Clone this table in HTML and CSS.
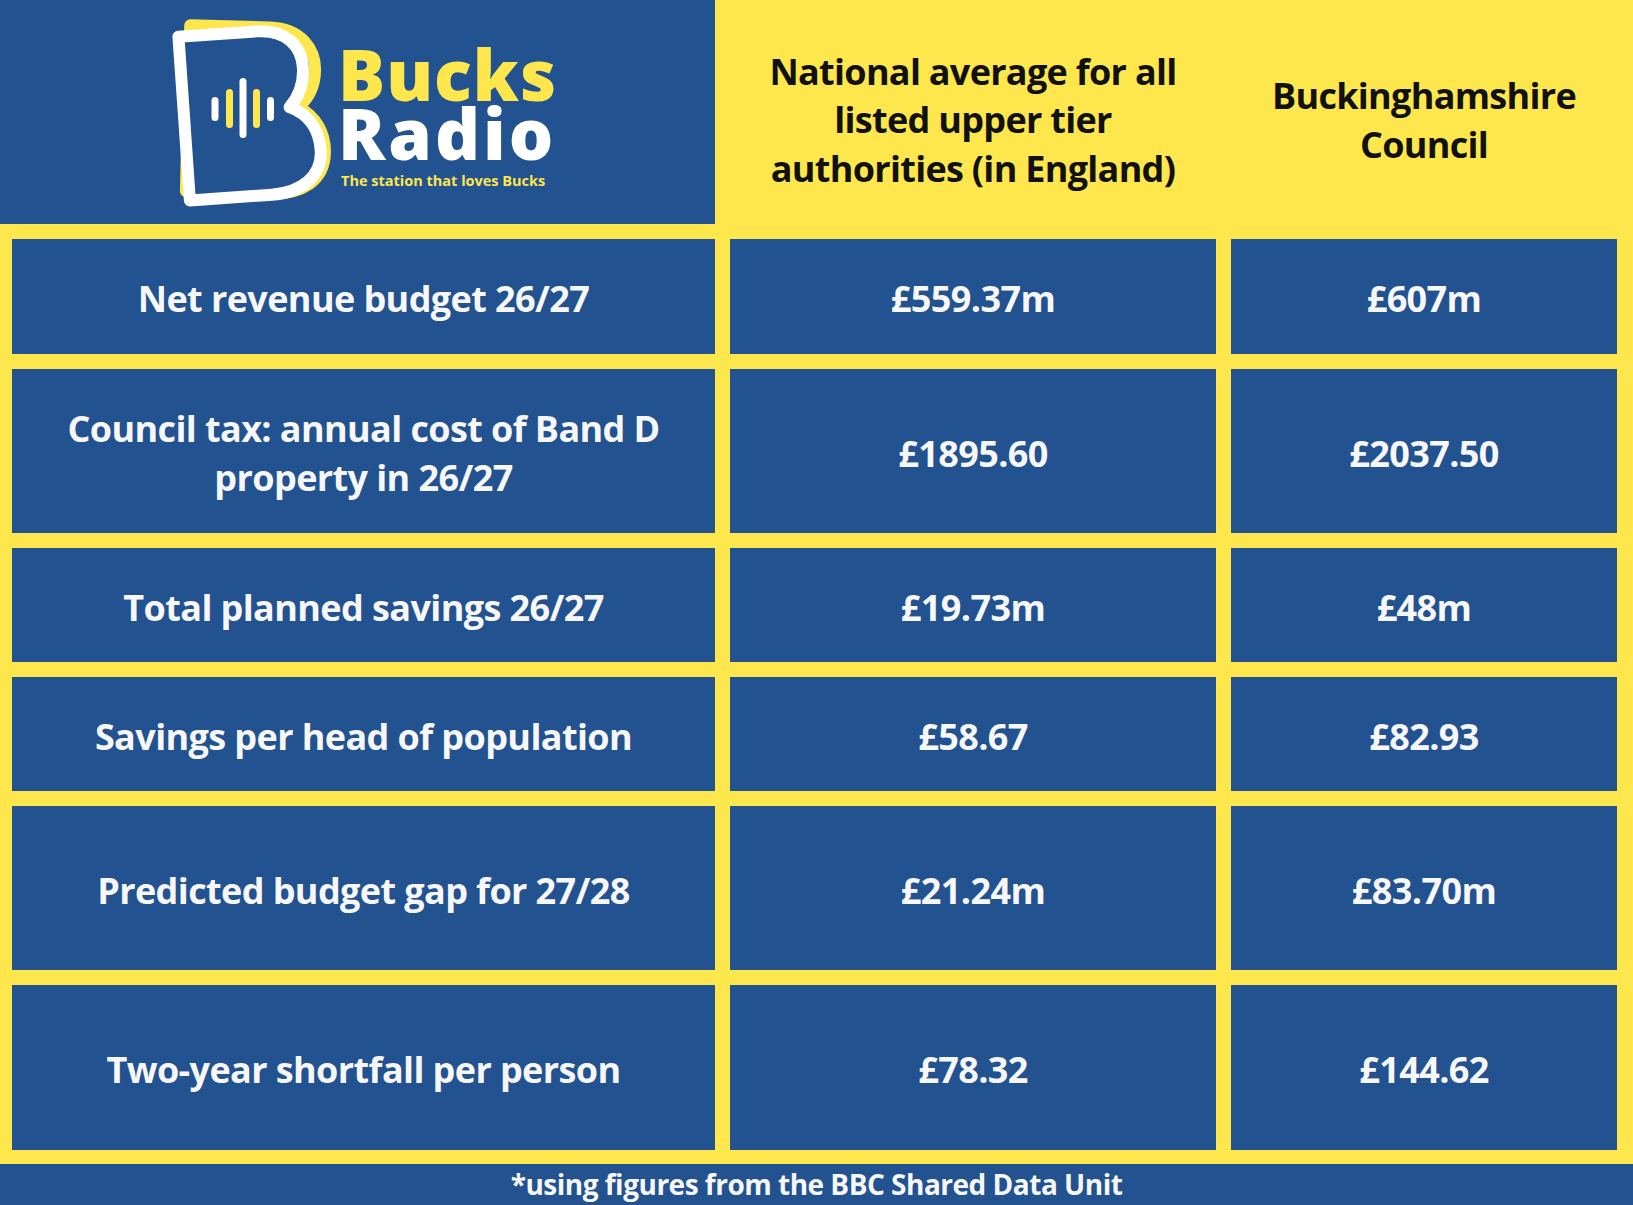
FILE: index.html
```html
<!DOCTYPE html>
<html lang="en">
<head>
<meta charset="utf-8">
<title>Bucks Radio – Council budget comparison</title>
<link rel="stylesheet" href="styles.css">
</head>
<body>
<div class="page">
  <header class="top">
    <div class="logo-cell">
      <svg class="logo-mark" width="160" height="200" viewBox="0 0 160 200" aria-hidden="true">
        <path class="b-yellow" d="M14,16 L94,16 C124,16 140,36 140,58 C140,76 132,88 124,95 C142,104 152,120 152,140 C152,168 130,182 98,182 L14,182 Z" transform="translate(4,-3) rotate(1.5 80 100)"/>
        <path class="b-white" d="M14,18 L92,18 C122,18 136,36 136,57 C136,75 128,88 120,96 C138,104 148,120 148,141 C148,167 126,182 96,182 L14,182 Z" transform="rotate(-4 80 100)"/>
        <line class="bar bar-w" x1="45" y1="86.5" x2="45" y2="103.5"/>
        <line class="bar bar-y" x1="59.5" y1="78.5" x2="59.5" y2="110.5"/>
        <line class="bar bar-w" x1="73" y1="67.5" x2="73" y2="120.5"/>
        <line class="bar bar-y" x1="86.5" y1="78.5" x2="86.5" y2="110.5"/>
        <line class="bar bar-w" x1="100.5" y1="86.5" x2="100.5" y2="103.5"/>
      </svg>
      <div class="logo-text">
        <div class="logo-bucks">Bucks</div>
        <div class="logo-radio">Radio</div>
        <div class="logo-tag">The station that loves Bucks</div>
      </div>
    </div>
    <div class="head-cell head-national">National average for all<br>listed upper tier<br>authorities (in England)</div>
    <div class="head-cell head-bucks">Buckinghamshire<br>Council</div>
  </header>

  <main class="grid">
    <div class="cell">Net revenue budget 26/27</div>
    <div class="cell">£559.37m</div>
    <div class="cell">£607m</div>

    <div class="cell">Council tax: annual cost of Band D<br>property in 26/27</div>
    <div class="cell">£1895.60</div>
    <div class="cell">£2037.50</div>

    <div class="cell">Total planned savings 26/27</div>
    <div class="cell">£19.73m</div>
    <div class="cell">£48m</div>

    <div class="cell">Savings per head of population</div>
    <div class="cell">£58.67</div>
    <div class="cell">£82.93</div>

    <div class="cell">Predicted budget gap for 27/28</div>
    <div class="cell">£21.24m</div>
    <div class="cell">£83.70m</div>

    <div class="cell">Two-year shortfall per person</div>
    <div class="cell">£78.32</div>
    <div class="cell">£144.62</div>
  </main>

  <footer class="foot">*using figures from the BBC Shared Data Unit</footer>
</div>
</body>
</html>
```

FILE: styles.css
```css
* { box-sizing: border-box; }

html, body {
  margin: 0;
  padding: 0;
  background: #fde74c;
}

.page {
  width: 1633px;
  height: 1205px;
  overflow: hidden;
  background: #fde74c;
  font-family: "Open Sans", "Noto Sans", sans-serif;
}

/* ---------- header ---------- */
.top {
  display: flex;
  align-items: flex-start;
  height: 239px;
}

.logo-cell {
  width: 715px;
  height: 224px;
  background: #22528f;
  display: flex;
  align-items: flex-start;
  padding-left: 170px;
  padding-top: 14px;
}

.logo-mark {
  flex: none;
  overflow: visible;
}

.b-yellow {
  fill: none;
  stroke: #fde74c;
  stroke-width: 12;
  stroke-linejoin: round;
}

.b-white {
  fill: #22528f;
  stroke: #ffffff;
  stroke-width: 12;
  stroke-linejoin: round;
}

.bar {
  stroke-width: 7;
  stroke-linecap: round;
}
.bar-w { stroke: #ffffff; }
.bar-y { stroke: #fde74c; }

.logo-text {
  margin-left: 8px;
  margin-top: 31px;
  display: flex;
  flex-direction: column;
  font-family: "Open Sans", sans-serif;
}

.logo-bucks,
.logo-radio {
  font-size: 70px;
  font-weight: 800;
  line-height: 59px;
  letter-spacing: 1px;
}

.logo-bucks { color: #fde74c; }
.logo-radio { color: #ffffff; letter-spacing: 3px; }

.logo-tag {
  margin-top: 8px;
  margin-left: 3px;
  font-size: 14.5px;
  font-weight: 700;
  line-height: 20px;
  color: #fde74c;
}

.head-cell {
  height: 239px;
  margin-left: 15px;
  padding-top: 2px;
  display: flex;
  align-items: center;
  justify-content: center;
  text-align: center;
  color: #111111;
  font-size: 36px;
  font-weight: 700;
  letter-spacing: -0.7px;
  line-height: 48.5px;
}

.head-national { width: 486px; }
.head-bucks { width: 386px; }

/* ---------- grid ---------- */
.grid {
  display: grid;
  grid-template-columns: 703px 486px 386px;
  grid-template-rows: 115px 164px 114px 114px 164px 165px;
  gap: 15px;
  padding: 0 16px 14px 12px;
}

.cell {
  background: #22528f;
  color: #f7f7f7;
  display: flex;
  align-items: center;
  justify-content: center;
  text-align: center;
  padding-top: 4px;
  font-size: 36px;
  font-weight: 700;
  letter-spacing: -0.6px;
  line-height: 49px;
}

/* ---------- footer ---------- */
.foot {
  height: 41px;
  background: #22528f;
  color: #f7f7f7;
  display: flex;
  align-items: center;
  justify-content: center;
  font-size: 28px;
  font-weight: 700;
  letter-spacing: -0.5px;
  line-height: 41px;
}
```
